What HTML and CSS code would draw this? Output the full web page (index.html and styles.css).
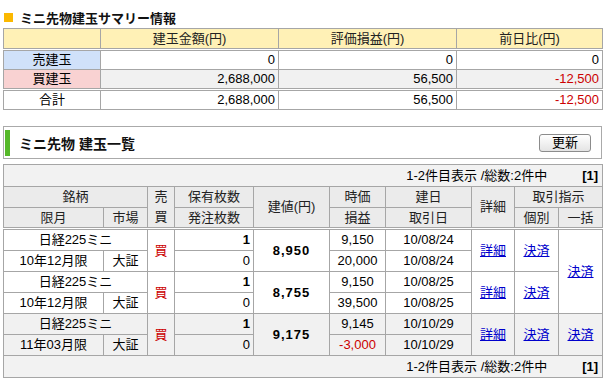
FILE: index.html
```html
<!DOCTYPE html>
<html lang="ja">
<head>
<meta charset="utf-8">
<title>ミニ先物建玉</title>
<link rel="stylesheet" href="styles.css">
</head>
<body>
<div class="page">
  <h2 class="sec-title"><span class="sq"></span>ミニ先物建玉サマリー情報</h2>
  <table class="summary">
    <colgroup><col class="c1"><col class="c2"><col class="c3"><col class="c4"></colgroup>
    <thead>
      <tr><th></th><th>建玉金額(円)</th><th>評価損益(円)</th><th>前日比(円)</th></tr>
    </thead>
    <tbody>
      <tr><td class="lbl sell">売建玉</td><td>0</td><td>0</td><td>0</td></tr>
      <tr class="gray"><td class="lbl buy">買建玉</td><td>2,688,000</td><td>56,500</td><td class="neg">-12,500</td></tr>
      <tr class="total"><td class="lbl">合計</td><td>2,688,000</td><td>56,500</td><td class="neg">-12,500</td></tr>
    </tbody>
  </table>

  <div class="box-title">
    <span class="bar"></span>
    <span class="ttl">ミニ先物 建玉一覧</span>
    <button class="btn" type="button">更新</button>
  </div>

  <table class="list">
    <colgroup>
      <col class="w100"><col class="w44"><col class="w27"><col class="w79"><col class="w76">
      <col class="w56"><col class="w86"><col class="w43"><col class="w44"><col class="w44">
    </colgroup>
    <thead>
      <tr class="pager"><td colspan="10"><span>1-2件目表示 /総数:2件中</span><span class="pg">[1]</span></td></tr>
      <tr class="h1">
        <th colspan="2">銘柄</th>
        <th rowspan="2" class="bs">売<br>買</th>
        <th>保有枚数</th>
        <th rowspan="2">建値(円)</th>
        <th>時価</th>
        <th>建日</th>
        <th rowspan="2">詳細</th>
        <th colspan="2">取引指示</th>
      </tr>
      <tr class="h2">
        <th>限月</th><th>市場</th><th>発注枚数</th><th>損益</th><th>取引日</th><th>個別</th><th>一括</th>
      </tr>
    </thead>
    <tbody>
      <tr>
        <td colspan="2" class="c">日経225ミニ</td>
        <td rowspan="2" class="c red">買</td>
        <td class="r b">1</td>
        <td rowspan="2" class="c price">8,950</td>
        <td class="c">9,150</td>
        <td class="c">10/08/24</td>
        <td rowspan="2" class="c"><a href="#">詳細</a></td>
        <td rowspan="2" class="c"><a href="#">決済</a></td>
        <td rowspan="4" class="c"><a href="#">決済</a></td>
      </tr>
      <tr>
        <td class="c">10年12月限</td><td class="c">大証</td>
        <td class="r">0</td>
        <td class="c">20,000</td>
        <td class="c">10/08/24</td>
      </tr>
      <tr>
        <td colspan="2" class="c">日経225ミニ</td>
        <td rowspan="2" class="c red">買</td>
        <td class="r b">1</td>
        <td rowspan="2" class="c price">8,755</td>
        <td class="c">9,150</td>
        <td class="c">10/08/25</td>
        <td rowspan="2" class="c"><a href="#">詳細</a></td>
        <td rowspan="2" class="c"><a href="#">決済</a></td>
      </tr>
      <tr>
        <td class="c">10年12月限</td><td class="c">大証</td>
        <td class="r">0</td>
        <td class="c">39,500</td>
        <td class="c">10/08/25</td>
      </tr>
      <tr class="gray">
        <td colspan="2" class="c">日経225ミニ</td>
        <td rowspan="2" class="c red">買</td>
        <td class="r b">1</td>
        <td rowspan="2" class="c price">9,175</td>
        <td class="c">9,145</td>
        <td class="c">10/10/29</td>
        <td rowspan="2" class="c"><a href="#">詳細</a></td>
        <td rowspan="2" class="c"><a href="#">決済</a></td>
        <td rowspan="2" class="c"><a href="#">決済</a></td>
      </tr>
      <tr class="gray">
        <td class="c">11年03月限</td><td class="c">大証</td>
        <td class="r">0</td>
        <td class="c red">-3,000</td>
        <td class="c">10/10/29</td>
      </tr>
    </tbody>
    <tfoot>
      <tr class="pager"><td colspan="10"><span>1-2件目表示 /総数:2件中</span><span class="pg">[1]</span></td></tr>
    </tfoot>
  </table>
</div>
</body>
</html>
```

FILE: styles.css
```css
body {
  margin: 0;
  background: #fff;
  color: #000;
  font-family: "Liberation Sans", "Noto Sans CJK JP", sans-serif;
  font-size: 13px;
}

.page {
  width: 599px;
  padding-left: 3px;
}

.sec-title {
  margin: 0;
  height: 28px;
  box-sizing: border-box;
  padding: 6px 0 0 1px;
  display: flex;
  align-items: center;
  gap: 7px;
  font-size: 13px;
  font-weight: bold;
  color: #111;
}

.sq {
  width: 9px;
  height: 9px;
  background: #fbb800;
}

table {
  border-collapse: collapse;
  table-layout: fixed;
  width: 599px;
}

th, td {
  border: 1px solid #a6a6a6;
  padding: 0 3px;
  font-weight: normal;
  white-space: nowrap;
  overflow: hidden;
}

/* summary */
.summary .c1 { width: 97px; }
.summary .c2 { width: 178px; }
.summary .c3 { width: 178px; }
.summary .c4 { width: 146px; }

.summary th {
  background: #fff1b6;
  line-height: 19px;
  border-bottom: 3px double #a6a6a6;
  text-align: center;
  color: #222;
}

.summary td {
  line-height: 18px;
  text-align: right;
}

.summary td.lbl {
  text-align: center;
}

.summary .sell { background: #d0e1f9; }
.summary .buy { background: #f9d2d2; }
.summary tr.gray td { background: #f1f1f1; }
.summary tr.gray td.buy { background: #f9d2d2; }
.summary tr.total td { border-top: 3px double #a6a6a6; }

.neg, .red { color: #cc0000; }

/* box title */
.box-title {
  margin-top: 16px;
  height: 33px;
  box-sizing: border-box;
  border: 1px solid #aaa;
  display: flex;
  align-items: center;
  padding-left: 1px;
}

.bar {
  width: 5px;
  height: 26px;
  background: #55b829;
}

.ttl {
  margin-left: 9px;
  font-size: 14px;
  font-weight: bold;
  color: #111;
}

.btn {
  margin-left: auto;
  margin-right: 10px;
  width: 52px;
  height: 18px;
  padding: 0;
  border: 1px solid #8c8c8c;
  border-radius: 3px;
  background: linear-gradient(#ffffff, #e4e4e4);
  font-family: "Liberation Sans", "Noto Sans CJK JP", sans-serif;
  font-size: 13px;
  line-height: 16px;
  color: #000;
}

/* list */
.list {
  margin-top: 5px;
}

.list .w100 { width: 100px; }
.list .w44 { width: 44px; }
.list .w27 { width: 27px; }
.list .w79 { width: 79px; }
.list .w76 { width: 76px; }
.list .w56 { width: 56px; }
.list .w86 { width: 86px; }
.list .w43 { width: 43px; }

.list tr.pager td {
  background: #f2f2f2;
  line-height: 21px;
  text-align: right;
  padding-right: 4px;
}

.list .pg {
  margin-left: 35px;
  font-weight: bold;
}

.list th {
  background: #ebebeb;
  text-align: center;
  color: #222;
  padding: 0 1px;
}

.list tr.h1 th { line-height: 20px; }
.list tr.h2 th { line-height: 19px; border-bottom: 3px double #a6a6a6; }
.list th.bs { line-height: 16px; border-bottom: 3px double #a6a6a6; }
.list tr.h1 th[rowspan] { border-bottom: 3px double #a6a6a6; }

.list tbody td {
  line-height: 20px;
}

.list tbody tr.gray td { background: #f1f1f1; }

.c { text-align: center; }
.r { text-align: right; }
.b { font-weight: bold; }

.price {
  font-weight: bold;
  letter-spacing: 1px;
}

a {
  color: #0000cc;
  text-decoration: underline;
}
```
